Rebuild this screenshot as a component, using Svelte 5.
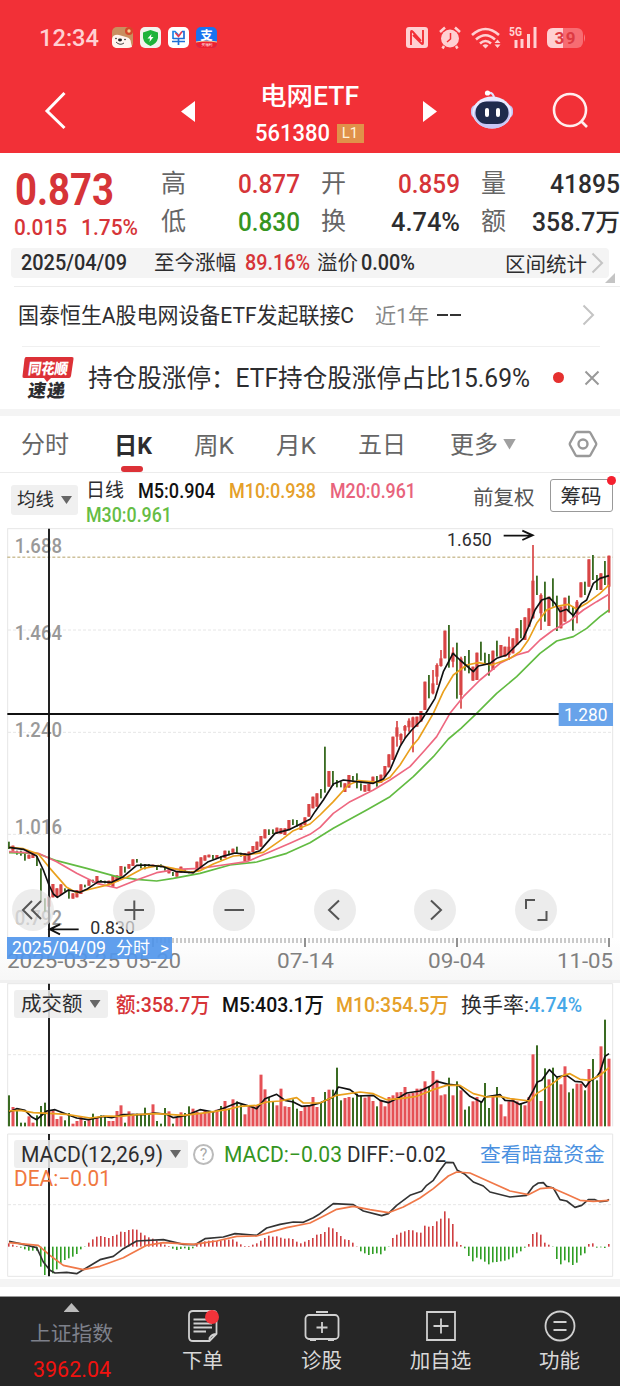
<script lang="ts">
	type Day = [number, number, number, number, number];

	// one row per trading day: high, low (distance below the 1.240 line), rising, turnover, macd
	const days: Day[] = [
		[335, 357, 0, 93, 10], [347, 362, 1, 58, 6], [362, 374, 0, 46, 2], [362, 377, 0, 11, -3],
		[370, 392, 0, 11, -8], [374, 386, 1, 30, -12], [372, 384, 1, 11, -12], [378, 408, 0, 33, -12],
		[415, 515, 0, 61, -60], [505, 545, 0, 71, -85], [500, 530, 1, 46, -88], [462, 502, 1, 48, -80],
		[475, 500, 1, 22, -68], [463, 495, 1, 30, -50], [475, 485, 0, 18, -40], [478, 506, 0, 40, -35],
		[490, 506, 1, 8, -30], [480, 502, 1, 16, -22], [463, 492, 1, 28, -8], [464, 472, 0, 16, -1],
		[449, 467, 1, 20, 12], [449, 458, 0, 38, 22], [438, 460, 1, 26, 30], [450, 456, 0, 33, 32],
		[452, 460, 0, 30, 29], [452, 462, 1, 16, 26], [438, 470, 1, 16, 32], [436, 455, 1, 46, 36],
		[408, 440, 1, 63, 45], [410, 428, 0, 11, 44], [402, 416, 1, 45, 50], [388, 408, 1, 38, 52],
		[387, 398, 0, 38, 51], [400, 415, 0, 36, 42], [402, 418, 0, 56, 34], [402, 410, 0, 38, 28],
		[404, 410, 1, 66, 24], [405, 420, 0, 16, 18], [403, 412, 0, 8, 12], [410, 422, 0, 55, 6],
		[418, 430, 1, 45, 2], [426, 438, 0, 8, -6], [425, 440, 1, 26, -10], [410, 428, 1, 42, -7],
		[418, 424, 0, 40, -5], [424, 430, 0, 60, -10], [424, 430, 1, 53, -5], [395, 425, 1, 43, 8],
		[382, 412, 1, 40, 12], [376, 392, 1, 46, 16], [374, 382, 1, 43, 18], [375, 388, 0, 42, 19],
		[375, 385, 1, 50, 17], [378, 390, 0, 61, 18], [362, 384, 1, 76, 20], [362, 376, 0, 53, 21],
		[356, 368, 1, 81, 22], [350, 372, 0, 75, 15], [368, 380, 0, 66, 7], [370, 394, 1, 36, 2],
		[365, 392, 1, 58, 2], [348, 366, 1, 60, 6], [335, 360, 1, 63, 10], [318, 350, 1, 155, 18],
		[298, 325, 1, 111, 26], [298, 315, 0, 88, 33], [298, 312, 0, 76, 30], [293, 310, 1, 63, 31],
		[295, 312, 1, 113, 27], [295, 315, 1, 60, 24], [270, 300, 1, 58, 25], [268, 285, 0, 81, 23],
		[270, 290, 0, 53, 15], [282, 300, 1, 46, 10], [262, 285, 1, 58, 15], [222, 260, 1, 63, 20],
		[200, 235, 1, 88, 26], [190, 230, 1, 58, 36], [177, 205, 0, 70, 38], [50, 188, 0, 103, 44],
		[123, 170, 1, 110, 58], [123, 168, 0, 110, 55], [150, 172, 0, 176, 44], [155, 172, 0, 78, 32],
		[160, 186, 1, 85, 22], [135, 173, 1, 88, 20], [138, 152, 0, 86, 12], [130, 175, 0, 98, 1],
		[160, 182, 0, 93, -14], [165, 185, 1, 86, -20], [162, 183, 1, 90, -25], [140, 160, 1, 76, -22],
		[138, 170, 0, 60, -20], [134, 158, 1, 76, -23], [108, 140, 1, 60, -12], [73, 112, 1, 88, -1],
		[20, 90, 1, 93, 26], [-27, 50, 1, 102, 36], [10, 45, 1, 103, 42], [-15, 25, 1, 118, 46],
		[-35, 5, 1, 98, 50], [-40, 67, 1, 100, 49], [-40, -10, 1, 113, 43], [-57, -25, 1, 113, 42],
		[-145, -60, 1, 135, 63], [-165, -95, 0, 118, 60], [-180, -107, 1, 166, 62], [-200, -135, 1, 140, 76],
		[-240, -190, 1, 93, 84], [-298, -215, 1, 96, 106], [-315, -187, 0, 146, 85], [-248, -188, 1, 93, 68],
		[-262, -94, 0, 135, 15], [-220, -64, 1, 108, 5], [-222, -178, 0, 50, -5], [-240, -170, 0, 60, -28],
		[-190, -148, 1, 75, -44], [-232, -150, 1, 88, -33], [-265, -208, 0, 76, -38], [-232, -198, 0, 130, -45],
		[-228, -163, 0, 55, -53], [-238, -180, 1, 88, -47], [-268, -220, 0, 118, -46], [-255, -220, 1, 66, -44],
		[-250, -220, 1, 30, -42], [-280, -210, 1, 75, -38], [-275, -230, 1, 83, -32], [-305, -255, 1, 75, -20],
		[-330, -275, 0, 70, -14], [-338, -270, 1, 63, -3], [-365, -310, 1, 88, 8], [-555, -335, 1, 216, 38],
		[-463, -405, 0, 243, 43], [-410, -300, 1, 76, 36], [-445, -325, 0, 174, 12], [-400, -312, 1, 141, 6],
		[-455, -370, 0, 176, -1], [-403, -297, 0, 148, -37], [-370, -305, 1, 126, -53], [-397, -325, 1, 180, -41],
		[-403, -355, 0, 102, -47], [-370, -298, 0, 113, -55], [-390, -320, 1, 128, -48], [-443, -398, 1, 128, -26],
		[-445, -405, 0, 108, -20], [-512, -430, 1, 172, 8], [-525, -450, 0, 202, 10], [-465, -420, 0, 138, -3],
		[-470, -420, 1, 240, -2], [-507, -435, 0, 320, -4], [-523, -352, 1, 203, 8]
	];

	// days whose body is much shorter than the wick
	const bodies: Record<number, [number, number]> = {
		97: [-8, 20],
		98: [12, 30],
		99: [-12, 2],
		100: [-28, -8],
		101: [-38, -8],
		106: [-140, -110],
		107: [-195, -160],
		108: [-215, -192],
		111: [-232, -205],
		113: [-215, -105],
		125: [-250, -225],
		131: [-448, -335],
		133: [-405, -350],
		142: [-385, -350],
		150: [-523, -430]
	};

	const px = (i: number) => 27 + i * 12;

	function body(i: number) {
		const [high, low] = bodies[i] ?? days[i];
		return { y: high, height: low - high };
	}

	const priceLines = [
		{ color: '#62bb42', points: '27,368 110,370 170,392 260,415 350,440 410,448 470,453 520,445 600,430 690,405 770,396 860,370 930,338 1000,295 1100,240 1170,200 1240,140 1300,80 1345,27 1383,-5 1430,-50 1490,-110 1550,-160 1620,-230 1670,-267 1720,-280 1760,-305 1800,-340 1827,-360' },
		{ color: '#ee6880', points: '27,365 115,370 170,395 230,430 290,460 350,474 410,450 470,428 530,418 600,415 690,402 740,395 800,370 870,340 930,313 960,292 1000,250 1050,215 1120,180 1170,150 1230,110 1275,60 1310,20 1350,-50 1390,-100 1440,-150 1500,-200 1550,-225 1585,-235 1620,-270 1660,-300 1710,-328 1750,-360 1790,-385 1827,-407' },
		{ color: '#eaa01c', points: '27,352 70,356 115,372 150,415 200,472 230,488 260,480 330,463 380,442 430,415 475,407 520,415 570,427 600,422 640,402 700,378 740,375 790,367 850,325 880,302 930,282 960,255 1000,215 1045,165 1075,152 1140,157 1170,142 1200,105 1235,50 1255,27 1300,-50 1330,-115 1360,-165 1400,-195 1435,-202 1475,-195 1530,-215 1560,-235 1585,-270 1610,-320 1640,-360 1665,-370 1705,-377 1730,-363 1760,-380 1800,-410 1827,-435' },
		{ color: '#111', points: '27,352 70,358 110,378 130,420 147,465 160,492 172,502 205,480 240,487 260,478 295,455 335,457 370,440 410,406 440,405 490,410 530,425 580,428 625,395 665,380 705,369 745,374 780,362 825,310 870,298 930,268 945,245 970,210 1000,162 1030,150 1070,155 1120,160 1150,147 1170,120 1200,50 1215,25 1235,0 1265,-30 1305,-95 1330,-175 1359,-230 1380,-210 1420,-175 1435,-192 1470,-200 1490,-215 1520,-225 1550,-255 1570,-275 1590,-320 1605,-360 1625,-390 1648,-397 1665,-380 1680,-355 1700,-362 1720,-343 1745,-380 1760,-390 1780,-440 1800,-455 1827,-463' }
	];

	const volumeLines = [
		{ color: '#111', points: '27,395 50,385 75,390 95,410 110,418 140,392 165,388 200,402 230,413 265,418 310,408 335,412 370,403 430,403 465,398 500,402 520,412 560,405 600,388 640,395 680,380 712,367 740,375 770,385 795,355 830,342 855,360 880,365 905,378 930,376 960,368 1000,350 1015,320 1050,328 1075,347 1120,345 1140,360 1165,367 1200,350 1220,338 1260,332 1290,318 1310,303 1345,312 1375,315 1410,348 1445,366 1455,350 1500,343 1515,360 1540,362 1558,372 1580,365 1600,330 1612,305 1625,300 1648,268 1670,290 1700,285 1725,303 1745,305 1757,320 1770,302 1790,290 1800,275 1815,228 1827,220' },
		{ color: '#eaa01c', points: '27,392 60,390 100,397 160,400 200,402 270,413 320,407 360,408 410,403 470,400 550,405 620,397 680,388 720,378 770,375 800,365 840,362 890,352 910,368 960,368 1010,345 1080,335 1120,340 1160,358 1200,355 1250,348 1300,328 1340,315 1380,315 1420,340 1460,350 1500,348 1530,355 1590,362 1610,340 1650,315 1690,285 1710,280 1740,297 1770,300 1800,285 1827,262' }
	];

	const macdLines = [
		{ color: '#333', points: '27,783 60,790 110,802 130,845 150,870 165,878 200,876 230,880 260,862 300,838 340,828 370,805 410,782 490,778 550,792 585,793 615,775 670,770 705,760 770,765 800,743 840,732 880,725 910,726 940,712 960,700 1000,670 1060,673 1090,692 1145,706 1165,700 1190,675 1230,645 1265,633 1280,615 1300,600 1320,570 1338,546 1360,547 1372,570 1395,582 1420,605 1450,617 1470,635 1530,650 1580,645 1600,618 1615,608 1630,607 1640,618 1660,623 1680,658 1700,662 1725,681 1745,675 1765,658 1785,658 1800,664 1820,662 1827,657' },
		{ color: '#f07848', points: '27,787 60,790 115,795 150,825 190,855 250,868 300,858 370,832 440,795 490,787 580,792 650,782 710,768 770,767 860,742 930,728 970,708 1010,687 1060,678 1110,688 1165,697 1210,680 1260,653 1300,625 1345,587 1370,575 1410,578 1470,605 1530,632 1585,643 1620,625 1655,622 1700,642 1740,660 1780,663 1827,660' }
	];

	const priceLabels = [
		{ text: '1.688', y: 25 },
		{ text: '1.464', y: 112 },
		{ text: '1.240', y: 209 },
		{ text: '1.016', y: 306 },
		{ text: '0.792', y: 397 }
	];

	const tools = [
		'M20 12 L11 21 L20 30 M29 12 L20 21 L29 30',
		'M11.5 21 H31 M21.3 11.5 V31',
		'M11.5 21 H31',
		'M25 11.5 L15 21 L25 30.5',
		'M17 11.5 L27 21 L17 30.5',
		'M11 20 V11 H20 M31.500 22 V31 H22.500'
	];

	const ticks = Array.from({ length: 115 }, (_, i) => 153 + i * 4);
</script>

<!-- the app's face is a narrow DIN, so every number is set to a fixed width -->
{#snippet fit(text: string, width: number, size: number, kind: string = '')}
	<svg class="fit {kind}" {width} height={size}>
		<text y={size * 0.86} font-size={size} textLength={width} lengthAdjust="spacingAndGlyphs">{text}</text>
	</svg>
{/snippet}

<div class="phone">
	<header>
		<div class="status">
			{@render fit('12:34', 60, 23, 'clock')}
			<div class="apps">
				<svg width="21" height="21" viewBox="0 0 21 21">
					<rect width="21" height="21" rx="5" fill="#c98f5f" />
					<path d="M0 12 Q1 7 7 8 L14 10 Q19 11 19 16 L20 20 Q17 21 15 21 H4 Q0 20 0 16Z" fill="#fff5ee" />
					<circle cx="17" cy="4" r="4" fill="#d6472a" />
					<circle cx="17" cy="4" r="1.700" fill="#f7cf8c" />
					<ellipse cx="8" cy="13" rx="2" ry="1.400" fill="#222" />
					<circle cx="4" cy="11.500" r=".8" fill="#222" />
					<circle cx="13" cy="12.500" r=".8" fill="#222" />
					<path d="M4 15 Q8 19 12 16" fill="none" stroke="#333" stroke-width=".9" />
				</svg>
				<svg width="21" height="21" viewBox="0 0 21 21">
					<rect width="21" height="21" rx="5" fill="#f1f4ee" />
					<path d="M10.500 3 L18 5.500 V11 Q17 16.500 10.500 19 Q4 16.500 3 11 V5.500Z" fill="#1db33a" />
					<path d="M11.500 7 L7.500 11.500 H10 L9.500 15 L13.500 10 H11Z" fill="#fff" />
				</svg>
				<svg width="21" height="21" viewBox="0 0 21 21">
					<rect width="21" height="21" rx="5" fill="#fff" />
					<path d="M5 12 V4.500 H7 L10.500 8" fill="none" stroke="#1f88e8" stroke-width="1.700" />
					<path d="M7.500 6 L10.500 9.500 L14 4.500" fill="none" stroke="#e33b52" stroke-width="1.600" />
					<path d="M14 4.500 H16 V11.500 H5 M4 14.500 H17 M10.500 11 V18" fill="none" stroke="#1f6fd6" stroke-width="1.700" />
				</svg>
				<svg width="21" height="21" viewBox="0 0 21 21">
					<rect width="21" height="21" rx="5" fill="#1a73f0" />
					<path d="M0 15 Q10 13 21 15 V17 Q20 21 16 21 H5 Q1 21 0 17Z" fill="#ee1f30" />
					<path d="M0 14.500 Q10 12.500 21 14.500 V15.500 Q10 13.500 0 15.500Z" fill="#ffc890" />
					<text x="4.300" y="12.500" font-size="12.500" font-weight="700" fill="#fff">支</text>
					<text x="5.500" y="19.300" font-size="3.700" fill="#fff">买福利</text>
				</svg>
			</div>
			<svg class="signals" width="180" height="24" viewBox="0 0 180 24">
				<rect x="0" y="1" width="22" height="21" rx="3" />
				<path d="M5 19 V6 Q5 4 7 6 L15 15 M17 4 V17 Q17 19 15 17 L7 9" fill="none" stroke="#f23037" stroke-width="1.900" />
				<circle cx="44" cy="12.500" r="9" />
				<path d="M34 6 L39 1.500 M54 6 L49 1.500 M38 20 L36.500 22.500 M50 20 L51.500 22.500" stroke="#ffd0d2" stroke-width="2.500" />
				<path d="M44.500 7 V13 L41 16" fill="none" stroke="#f23037" stroke-width="1.500" />
				<path d="M66 9 Q79.500 -3 93 9 M70 13.500 Q79.500 5 89 13.500 M74 17.500 Q79.500 12.500 85 17.500" fill="none" stroke="#ffd0d2" stroke-width="2.600" />
				<path d="M76.500 19.500 Q79.500 17 82.500 19.500 L79.500 22.500Z M88.500 17 L91.500 13.500 L94.500 17Z M88.500 18.500 L91.500 22 L94.500 18.500Z" />
				<text x="103" y="9.500" font-size="12" font-weight="700" textLength="13" lengthAdjust="spacingAndGlyphs">5G</text>
				<path d="M108.500 14 h3 v8 h-3z M114.500 13 h3 v9 h-3z M121 8 h3 v14 h-3z M127.500 1 h3 v21 h-3z" />
				<rect x="141" y="2" width="36" height="20" rx="6" opacity=".38" />
				<path d="M147 2 H157 V22 H147 Q141 22 141 16 V8 Q141 2 147 2Z" />
				<path d="M178 8 q2 4 0 8z" opacity=".5" />
				<text x="148.500" y="18" font-size="17" font-weight="700" textLength="21" fill="#dd3a42">39</text>
			</svg>
		</div>
		<div class="bar">
			<svg class="back" width="24" height="40" viewBox="0 0 24 40">
				<path d="M21.500 2 L4 20 L21.500 37" />
			</svg>
			<svg width="14" height="21" viewBox="0 0 14 21"><path d="M14 0 V21 L0 10.500Z" fill="#fff" /></svg>
			<div class="name">
				{@render fit('电网ETF', 99, 25, 'medium')}
				<div class="code">
					{@render fit('561380', 75, 23.5, 'medium')}
					<span class="level">L1</span>
				</div>
			</div>
			<svg width="14" height="21" viewBox="0 0 14 21"><path d="M0 0 V21 L14 10.500Z" fill="#fff" /></svg>
			<svg class="robot" width="44" height="42" viewBox="0 0 44 42">
				<path d="M18 3 Q24 2 24 9" fill="none" stroke="#dfe3ff" stroke-width="2" />
				<circle cx="17.500" cy="3" r="2.600" fill="#fff" />
				<rect x="1" y="15" width="42" height="13" rx="5" fill="#c5c7f5" />
				<ellipse cx="22" cy="22.500" rx="19.500" ry="16" fill="#e9ebff" />
				<ellipse cx="22" cy="24.500" rx="18" ry="14" fill="#c9c8f6" />
				<rect x="5.500" y="11.500" width="33" height="22.500" rx="11" fill="#1f2b4d" />
				<rect x="15" y="18" width="4" height="9" rx="2" fill="#fff" />
				<rect x="26" y="18" width="4" height="9" rx="2" fill="#fff" />
			</svg>
			<svg class="search" width="38" height="38" viewBox="0 0 38 38">
				<circle cx="18" cy="18" r="16" />
				<path d="M29.500 29.500 L35 35" />
			</svg>
		</div>
	</header>

	<section class="quote">
		<div class="price red">
			{@render fit('0.873', 99, 44, 'bold')}
			<div class="change">
				{@render fit('0.015', 53, 22.5, 'medium')}
				{@render fit('1.75%', 57, 22.5, 'medium')}
			</div>
		</div>
		<div class="grid">
			<span>高</span><b class="red">{@render fit('0.877', 62, 25)}</b>
			<span>开</span><b class="red">{@render fit('0.859', 62, 25)}</b>
			<span>量</span><b>{@render fit('41895', 70, 25)}</b>
			<span>低</span><b class="green">{@render fit('0.830', 62, 25)}</b>
			<span>换</span><b>{@render fit('4.74%', 69, 25)}</b>
			<span>额</span><b>{@render fit('358.7万', 88, 25)}</b>
		</div>
	</section>

	<section class="range">
		{@render fit('2025/04/09', 106, 21.5, 'medium')}
		<span class="since">至今涨幅</span>
		<span class="red">{@render fit('89.16%', 65, 21.5, 'medium')}</span>
		<span class="premium">溢价</span>
		{@render fit('0.00%', 54, 21.5, 'medium')}
		<span class="stat">区间统计</span>
		<svg class="chevron" width="13" height="22" viewBox="0 0 13 22"><path d="M1.500 1.500 L11 11 L1.500 20.500" /></svg>
		<i class="corner"></i>
	</section>

	<section class="fund">
		{@render fit('国泰恒生A股电网设备ETF发起联接C', 336, 21.5)}
		<span class="year">{@render fit('近1年', 54, 21)}</span>
		<i class="dash"></i><i class="dash"></i>
		<svg class="chevron" width="13" height="22" viewBox="0 0 13 22"><path d="M1.500 1.500 L11 11 L1.500 20.500" /></svg>
	</section>

	<section class="news">
		<svg class="logo" width="52" height="44" viewBox="0 0 52 44">
			<path d="M4 1 H50 Q52 1 51.500 3 L49 20 Q48.500 22 47 22 H29 L25 26 L22 22 H2 Q0 22 .5 20 L2.500 3 Q3 1 4 1Z" fill="#dc3137" />
			<g transform="skewX(-8)" font-weight="900">
				<text x="8" y="18" font-size="15" fill="#fff" textLength="40" lengthAdjust="spacingAndGlyphs">同花顺</text>
				<text x="11" y="41" font-size="18" fill="#222" textLength="37">速递</text>
			</g>
		</svg>
		{@render fit('持仓股涨停：ETF持仓股涨停占比15.69%', 442, 25)}
		<i class="dot"></i>
		<svg class="close" width="16" height="16" viewBox="0 0 16 16"><path d="M1.500 1.500 L14.500 14.500 M14.500 1.500 L1.500 14.500" /></svg>
	</section>

	<nav class="tabs">
		<span>分时</span>
		<span class="active">{@render fit('日K', 38, 24, 'bold')}</span>
		<span>{@render fit('周K', 40, 24)}</span>
		<span>{@render fit('月K', 40, 24)}</span>
		<span>五日</span>
		<span class="more">更多<i class="caret"></i></span>
		<svg class="hex" width="30" height="28" viewBox="0 0 30 28">
			<path d="M9 2 H21 Q22 2 22.500 3 L28 13 Q28.500 14 28 15 L22.500 25 Q22 26 21 26 H9 Q8 26 7.500 25 L2 15 Q1.500 14 2 13 L7.500 3 Q8 2 9 2Z" />
			<circle cx="15" cy="14" r="4.500" />
		</svg>
	</nav>

	<section class="legend">
		<button class="pick avg">均线<i class="caret"></i></button>
		<div class="averages">
			<span class="kind">日线</span>
			{@render fit('M5:0.904', 77, 20, 'medium black')}
			{@render fit('M10:0.938', 87, 20, 'medium gold')}
			{@render fit('M20:0.961', 86, 20, 'medium pink')}
			{@render fit('M30:0.961', 86, 20, 'medium lime')}
		</div>
		<span class="adjust">前复权</span>
		<button class="chips">筹码<i></i></button>
	</section>

	<section class="chart">
		<svg width="620" height="410" viewBox="0 -606 1860 1230">
			<path d="M22 -604 H1838 V624 M23 -604 V624" class="frame" />
			<path d="M24 -300 H1838 M24 7 H1838 M24 313 H1838" class="grid-line" />
			<path d="M22 -518.500 H1838" class="limit" />
			{#each priceLabels as label}
				<text class="scale" x="44" y={label.y * 3 - 606} font-size="61" textLength="142" lengthAdjust="spacingAndGlyphs">{label.text}</text>
			{/each}
			{#each days as [high, low, rising], i}
				{#if rising}
					<rect x={px(i) - 2.5} y={high} width="5" height={low - high} fill="#d84545" />
					<rect x={px(i) - 5} {...body(i)} width="9.500" fill="#d84545" />
				{:else}
					<rect x={px(i) - 3} y={high} width="5.500" height={low - high} fill="#3a6b22" />
				{/if}
			{/each}
			{#each priceLines as line}
				<polyline points={line.points} stroke={line.color} />
			{/each}
			<path class="cross" d="M147 -604 V624 M22 -48 H1680" />
			<rect x="1676" y="-81" width="163" height="69" fill="#68a3ea" />
			<text x="1692" y="-26" font-size="54" fill="#fff" textLength="130" lengthAdjust="spacingAndGlyphs">1.280</text>
			<text x="1341" y="-553" font-size="53" textLength="134" lengthAdjust="spacingAndGlyphs">1.650</text>
			<path class="arrow" d="M1511 -583 H1598 M1567 -598 L1598 -584 L1567 -570" />
			<text x="271" y="612" font-size="53" textLength="134" lengthAdjust="spacingAndGlyphs">0.830</text>
			<path class="arrow" d="M236 598 H149 M180 583 L149 598 L180 613" />
		</svg>
		<div class="tools">
			{#each tools as icon}
				<button><svg width="42" height="42" viewBox="0 0 42 42"><path d={icon} /></svg></button>
			{/each}
		</div>
	</section>

	<section class="axis">
		<svg class="ruler" width="620" height="10" viewBox="0 0 620 10">
			{#each ticks as x, i}
				<rect x={x - 0.8} y="0" width="1.600" height={i % 38 ? 5 : 9} fill={i % 38 ? '#bdbdbd' : '#777'} />
			{/each}
		</svg>
		<div class="dates">
			{@render fit('2025-03-25', 113, 20)}
			{@render fit('05-20', 55, 20)}
			{@render fit('07-14', 57, 20)}
			{@render fit('09-04', 57, 20)}
			{@render fit('11-05', 56, 20)}
		</div>
		<div class="tag">{@render fit('2025/04/09', 94, 18)}<span>分时</span><span>&gt;</span></div>
	</section>

	<section class="volume">
		<svg class="plot" width="620" height="144" viewBox="0 8 1860 432">
			<path d="M22 10 H1838 V438 M23 10 V438" class="frame" />
			<path d="M24 223 H1838" class="grid-line" />
			{#each days as [, , rising, amount], i}
				{#if rising}
					<rect x={px(i) - 4.5} y={438 - amount} width="9" height={amount} fill="#e55055" />
				{:else}
					<rect x={px(i) - 3} y={438 - amount} width="6" height={amount} fill="#3a6b22" />
				{/if}
			{/each}
			{#each volumeLines as line}
				<polyline points={line.points} stroke={line.color} />
			{/each}
			<path class="cross" d="M147 10 V438" />
		</svg>
		<div class="info">
			<button class="pick amount">成交额<i class="caret"></i></button>
			{@render fit('额:358.7万', 94, 21, 'medium red')}
			{@render fit('M5:403.1万', 102, 21, 'medium black')}
			{@render fit('M10:354.5万', 113, 21, 'medium gold')}
			<div class="turnover">
				{@render fit('换手率:', 68, 21)}
				{@render fit('4.74%', 53, 21, 'medium sky')}
			</div>
		</div>
	</section>

	<section class="macd">
		<svg class="plot" width="620" height="144" viewBox="0 458 1860 432">
			<path d="M23 888 V461 H1838 V888 Z" class="frame" />
			<path d="M24 673 H1838" class="grid-line" />
			{#each days as [, , , , value], i}
				<rect x={px(i) - 3} y={value > 0 ? 799 - value : 799} width="4.800" height={Math.abs(value)} fill={value > 0 ? '#cf3f42' : '#2f9e24'} />
			{/each}
			{#each macdLines as line}
				<polyline points={line.points} stroke={line.color} />
			{/each}
			<path class="cross" d="M147 461 V888" />
		</svg>
		<div class="info">
			<button class="pick params">{@render fit('MACD(12,26,9)', 142, 21.5)}<i class="caret"></i></button>
			<span class="help">?</span>
			{@render fit('MACD:−0.03', 118, 22, 'green')}
			{@render fit('DIFF:−0.02', 99, 22)}
			<a href="#funds">查看暗盘资金</a>
		</div>
		<div class="dea">{@render fit('DEA:−0.01', 97, 21.5)}</div>
	</section>

	<footer>
		<div class="index">
			<i></i>
			<span>上证指数</span>
			{@render fit('3962.04', 78, 22)}
		</div>
		<div class="item">
			<svg width="32" height="34" viewBox="0 0 32 34">
				<path d="M6 2 H26 Q29.500 2 29.500 5 V25 L22.500 32 H6 Q2 32 2 28 V6 Q2 2 6 2Z M6.500 10.500 H20 M6.500 14.500 H25 M6.500 18.500 H25 M6.500 22.500 H19 M22.500 32 V29 Q25 25 29.500 25" />
				<circle cx="25" cy="8" r="7" fill="#f2333a" stroke="none" />
			</svg>
			<span>下单</span>
		</div>
		<div class="item">
			<svg width="36" height="34" viewBox="0 0 36 34">
				<rect x="1.500" y="6" width="33" height="24" rx="3.500" />
				<path d="M12 3 H24 M18 13 V24 M12.500 18.500 H23.500 M6 31 H12 M24 31 H30" />
			</svg>
			<span>诊股</span>
		</div>
		<div class="item">
			<svg width="32" height="34" viewBox="0 0 32 34">
				<path d="M2 3 H30 V31 H2Z M16 9.500 V24.500 M8.500 17 H23.500" />
			</svg>
			<span>加自选</span>
		</div>
		<div class="item">
			<svg width="32" height="34" viewBox="0 0 32 34">
				<circle cx="16" cy="17" r="14.500" />
				<path d="M9.500 13 H22.500 M9.500 21 H22.500" />
			</svg>
			<span>功能</span>
		</div>
	</footer>
</div>

<style>
	:global(body) {
		background: #fff;
	}

	.phone {
		width: 620px;
		height: 1386px;
		overflow: hidden;
		background: #fff;
		color: #2d2d2f;
		font-family: Roboto, 'Noto Sans CJK SC', sans-serif;
		font-size: 20px;
		line-height: 1;
	}

	svg {
		display: block;
		flex: none;
	}

	text {
		fill: currentColor;
	}

	text[fill='#fff'] {
		fill: #fff;
	}

	.fit {
		overflow: visible;
	}

	.medium {
		font-weight: 500;
	}

	.bold {
		font-weight: 700;
	}

	.red {
		color: #d63438;
	}

	.green {
		color: #35951f;
	}

	.black {
		color: #111;
	}

	.gold {
		color: #e5a02a;
	}

	.pink {
		color: #e8637c;
	}

	.lime {
		color: #65bd45;
	}

	.sky {
		color: #46a8e8;
	}

	button {
		display: flex;
		align-items: center;
		padding: 0;
		border: none;
		background: none;
		color: inherit;
		font: inherit;
	}

	.caret {
		width: 11px;
		height: 8px;
		background: #666;
		clip-path: polygon(0 0, 100% 0, 50% 100%);
	}

	/* header */

	header {
		box-sizing: border-box;
		height: 153px;
		background: #f23037;
		color: #fff;
	}

	.status {
		display: flex;
		align-items: center;
		height: 75px;
		padding-left: 39px;
	}

	.clock {
		color: #ffd0d2;
		font-weight: 500;
	}

	.apps {
		display: flex;
		gap: 7px;
		margin-left: 13px;
	}

	.signals {
		margin-left: 189px;
		fill: #ffd0d2;
	}

	.signals text {
		fill: #ffd0d2;
	}

	.signals text[fill] {
		fill: #dd3a42;
	}

	.bar {
		display: flex;
		align-items: center;
		height: 72px;
		padding-left: 43px;
	}

	.back {
		margin-right: 114px;
		fill: none;
		stroke: #fff;
		stroke-width: 3;
	}

	.name {
		display: flex;
		flex-direction: column;
		align-items: center;
		gap: 13px;
		width: 228px;
		padding-top: 6px;
	}

	.code {
		display: flex;
		align-items: center;
		gap: 7px;
	}

	.level {
		width: 27px;
		background: #e0914a;
		color: #fff4da;
		font-size: 15px;
		line-height: 19px;
		text-align: center;
	}

	.robot {
		margin-left: 33px;
	}

	.search {
		margin-left: 38px;
		fill: none;
		stroke: #ffeeee;
		stroke-width: 2.6;
	}

	/* quote */

	.quote {
		display: flex;
		height: 95px;
	}

	.price {
		width: 145px;
		padding: 14px 0 0 15px;
	}

	.change {
		display: flex;
		gap: 14px;
		margin: 5px 0 0 -1px;
	}

	.grid {
		display: grid;
		grid-template-columns: 26px 114px 46px 114px 46px 114px;
		grid-template-rows: 38px 38px;
		align-items: center;
		align-content: start;
		padding-top: 11px;
		color: #666;
		font-size: 25px;
	}

	.grid b {
		justify-self: end;
		color: #2d2d2f;
		font-weight: 500;
	}

	.grid b.red {
		color: #d63438;
	}

	.grid b.green {
		color: #35951f;
	}

	.grid span {
		justify-self: end;
		padding-top: 1px;
	}

	.range {
		position: relative;
		display: flex;
		align-items: center;
		width: 588px;
		height: 30px;
		margin-left: 11px;
		padding-left: 10px;
		border-radius: 4px;
		background: #f4f4f4;
		font-size: 20.5px;
	}

	.range .fit {
		margin-top: -2px;
	}

	.since {
		margin: 0 9px 0 27px;
	}

	.premium {
		margin: 0 3px 0 7px;
	}

	.stat {
		margin-left: 90px;
		padding-top: 4px;
	}

	.chevron {
		fill: none;
		stroke: #c4c4c4;
		stroke-width: 2;
	}

	.range .chevron {
		margin-left: 4px;
	}

	.corner {
		position: absolute;
		right: -6px;
		bottom: -5px;
		width: 10px;
		height: 10px;
		background: #c4c4c4;
		clip-path: polygon(100% 0, 100% 100%, 0 100%);
	}

	.fund {
		box-sizing: border-box;
		display: flex;
		align-items: center;
		height: 60px;
		margin: 8px 0 0 14px;
		padding: 0 0 3px 4px;
		border-top: 1px solid #ececec;
	}

	.year {
		margin: 0 8px 0 21px;
		color: #888;
	}

	.dash {
		width: 11px;
		height: 2px;
		margin-right: 2px;
		background: #333;
	}

	.fund .chevron {
		margin-left: 119px;
	}

	.news {
		box-sizing: border-box;
		display: flex;
		align-items: center;
		height: 63px;
		margin: 0 20px 0 22px;
		padding-bottom: 1px;
		border-top: 1px solid #f0f0f0;
	}

	.logo {
		margin-right: 14px;
	}

	.dot {
		width: 11px;
		height: 11px;
		margin-left: 23px;
		border-radius: 50%;
		background: #e5302f;
	}

	.close {
		margin-left: 20px;
		fill: none;
		stroke: #999;
		stroke-width: 2;
	}

	/* tabs */

	.tabs {
		box-sizing: border-box;
		display: flex;
		align-items: center;
		height: 64px;
		padding: 2px 0 0 21px;
		border-top: 7px solid #f4f4f4;
		border-bottom: 1px solid #ececec;
		color: #666;
		font-size: 24px;
	}

	.tabs span {
		margin-right: 42px;
	}

	.tabs .active {
		position: relative;
		margin-left: 3px;
		color: #2d2d2f;
	}

	.tabs .active::after {
		content: '';
		position: absolute;
		bottom: -15px;
		left: 7px;
		width: 22px;
		height: 6px;
		border-radius: 3px;
		background: #dc3137;
	}

	.tabs .more {
		display: flex;
		align-items: center;
		gap: 5px;
		margin: 0 52px 0 2px;
	}

	.tabs .caret {
		width: 13px;
		height: 11px;
		margin-top: -2px;
		background: #a0a0a0;
	}

	.hex {
		margin-top: -2px;
		fill: none;
		stroke: #999;
		stroke-width: 2.4;
	}

	.legend {
		display: flex;
		height: 55px;
		padding-left: 11px;
		font-size: 20.5px;
	}

	.pick {
		box-sizing: border-box;
		gap: 7px;
		border-radius: 3px;
		background: #f0f0f0;
	}

	.avg {
		width: 67px;
		height: 30px;
		margin-top: 12px;
		padding-left: 6px;
		font-size: 18.5px;
	}

	.averages {
		display: flex;
		flex-wrap: wrap;
		gap: 4px 14px;
		align-content: start;
		width: 356px;
		margin-left: 8px;
		padding-top: 8px;
	}

	.averages .kind {
		font-size: 19px;
	}

	.adjust {
		margin: 15px 0 0 31px;
		color: #555;
	}

	.chips {
		position: relative;
		box-sizing: border-box;
		justify-content: center;
		width: 63px;
		height: 33px;
		margin: 6px 0 0 15px;
		padding-top: 3px;
		border: 1px solid #999;
		border-radius: 3px;
	}

	.chips i {
		position: absolute;
		top: -4px;
		right: -4px;
		width: 9px;
		height: 9px;
		border-radius: 50%;
		background: #f5202f;
	}

	/* charts */

	polyline {
		fill: none;
		stroke-width: 5;
		stroke-linejoin: round;
	}

	.frame {
		fill: none;
		stroke: #e6e6e6;
		stroke-width: 3;
	}

	.grid-line {
		stroke: #e6e6e6;
		stroke-width: 3;
		stroke-dasharray: 9 6;
	}

	.limit {
		stroke: #b5a268;
		stroke-width: 3;
		stroke-dasharray: 9 6;
	}

	.scale {
		fill: #999;
		font-weight: 500;
	}

	.cross,
	.arrow {
		fill: none;
		stroke: #111;
		stroke-width: 5.5;
	}

	.chart {
		position: relative;
		height: 410px;
	}

	.tools {
		position: absolute;
		top: 361px;
		left: 12px;
		display: flex;
		gap: 58.6px;
	}

	.tools button {
		border-radius: 50%;
		background: rgba(228, 228, 228, 0.72);
	}

	.tools path {
		fill: none;
		stroke: #555;
		stroke-width: 2;
	}

	.axis {
		position: relative;
		box-sizing: border-box;
		height: 45px;
		border-bottom: 3px solid #f0f0f0;
		background: linear-gradient(#fff, #f7f7f7);
	}

	.dates {
		display: flex;
		padding: 3px 0 0 7px;
		color: #808080;
	}

	.dates svg:nth-child(2) {
		margin: 0 96px 0 6px;
	}

	.dates svg:nth-child(4) {
		margin: 0 72px 0 94px;
	}

	.tag {
		position: absolute;
		top: -1px;
		left: 7px;
		display: flex;
		align-items: center;
		gap: 10px;
		width: 160px;
		height: 22px;
		padding-left: 5px;
		background: rgba(84, 152, 236, 0.93);
		color: #fff;
		font-size: 17px;
	}

	.volume,
	.macd {
		position: relative;
		height: 144px;
	}

	.macd {
		margin-top: 6px;
	}

	.plot {
		position: absolute;
		inset: 0;
	}

	.info {
		position: relative;
		display: flex;
		align-items: center;
		height: 42px;
		padding-left: 14px;
	}

	.volume .pick,
	.macd .pick {
		height: 28px;
		padding-left: 7px;
		background: rgba(236, 236, 236, 0.85);
	}

	.amount {
		width: 94px;
		margin-right: 8px;
		font-size: 20.5px;
	}

	.volume .info > svg {
		margin-right: 12px;
	}

	.turnover {
		display: flex;
	}

	.params {
		width: 174px;
	}

	.help {
		box-sizing: border-box;
		width: 21px;
		height: 21px;
		margin: 0 10px 0 5px;
		border: 2px solid #bbb;
		border-radius: 50%;
		color: #aaa;
		font-size: 16px;
		line-height: 18px;
		text-align: center;
	}

	.macd .info > svg + svg {
		margin-left: 5px;
	}

	.macd a {
		margin-left: 34px;
		padding-top: 2px;
		color: #4a90e0;
		font-size: 20.8px;
		text-decoration: none;
	}

	.dea {
		position: relative;
		margin-top: -8px;
		padding-left: 14px;
		color: #f0783f;
	}

	/* bottom bar */

	footer {
		display: grid;
		grid-template-columns: 143px 119px 119px 119px 119px;
		height: 89px;
		margin-top: 19px;
		border-top: 1px solid #999;
		background: #262626;
		color: #d8d8d8;
		box-shadow: 0 -9px #fff, 0 -17px #f4f4f4;
	}

	.index,
	.item {
		display: flex;
		flex-direction: column;
		align-items: center;
	}

	.index {
		color: #f0120f;
	}

	.index i {
		width: 16px;
		height: 9px;
		margin-top: 6px;
		background: #bbb;
		clip-path: polygon(50% 0, 100% 100%, 0 100%);
	}

	.index span {
		margin: 12px 0 13px;
		color: #7d808a;
		font-size: 20.8px;
	}

	.item {
		gap: 8px;
		padding-top: 12px;
		font-size: 20.5px;
	}

	.item svg {
		fill: none;
		stroke: #d0d0d0;
		stroke-width: 1.8;
	}
</style>
